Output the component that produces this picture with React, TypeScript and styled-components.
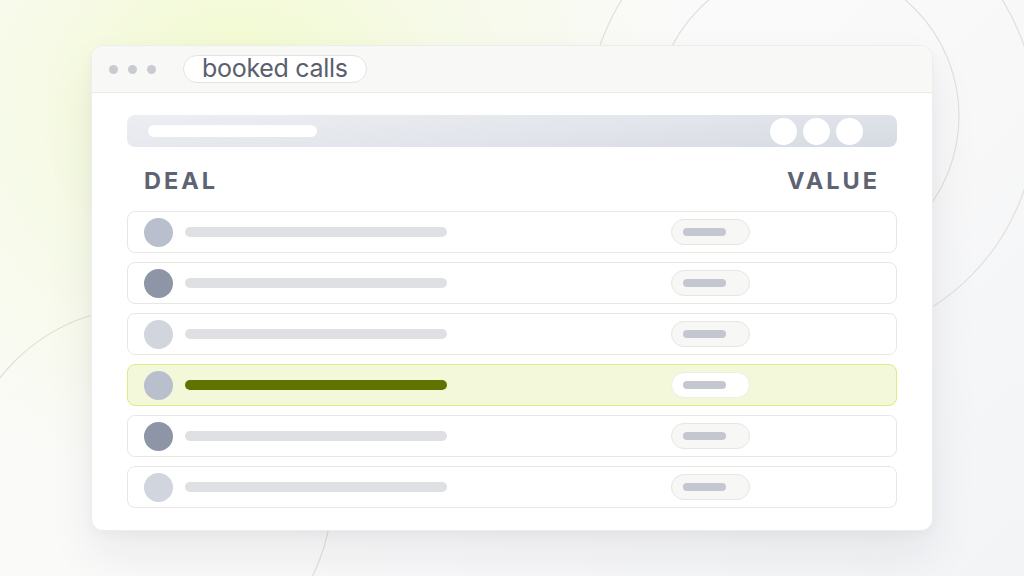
import styled, { createGlobalStyle } from 'styled-components';

const GlobalStyle = createGlobalStyle`
    html, body {
        margin: 0;
        padding: 0;
    }
    body {
        font-family: Inter, "Noto Sans", sans-serif;
        background: #fafafa;
    }
`;

type Tone = 'mid' | 'dark' | 'light';

const rows: { tone: Tone; active?: boolean }[] = [
    { tone: 'mid' },
    { tone: 'dark' },
    { tone: 'light' },
    { tone: 'mid', active: true },
    { tone: 'dark' },
    { tone: 'light' },
];

const avatarColors: Record<Tone, string> = {
    mid: '#b9bfcc',
    dark: '#8e95a6',
    light: '#d1d5dd',
};

const App = () => {
    return (
        <>
            <GlobalStyle />
            <Stage>
                <Rings viewBox="0 0 1024 576" aria-hidden>
                    <circle cx="807" cy="116" r="152" />
                    <circle cx="812" cy="118" r="224" />
                    <circle cx="146" cy="493" r="186" />
                </Rings>
                <Window>
                    <TitleBar>
                        <Dots>
                            <Dot />
                            <Dot />
                            <Dot />
                        </Dots>
                        <Tab>booked calls</Tab>
                    </TitleBar>
                    <Body>
                        <SearchBar>
                            <SearchField />
                            <Buttons>
                                <RoundButton />
                                <RoundButton />
                                <RoundButton />
                            </Buttons>
                        </SearchBar>
                        <Header>
                            <span>DEAL</span>
                            <span>VALUE</span>
                        </Header>
                        <List>
                            {rows.map((row, index) => (
                                <Row key={index} $active={row.active}>
                                    <Avatar $color={avatarColors[row.tone]} />
                                    <NameBar $active={row.active} />
                                    <ValuePill $active={row.active}>
                                        <ValueBar />
                                    </ValuePill>
                                </Row>
                            ))}
                        </List>
                    </Body>
                </Window>
            </Stage>
        </>
    );
};

const Stage = styled.div`
    position: relative;
    width: 1024px;
    height: 576px;
    overflow: hidden;
    display: flex;
    align-items: center;
    justify-content: center;
    background:
        radial-gradient(ellipse 440px 400px at 240px 110px, rgba(240, 250, 200, 1) 0, rgba(244, 250, 220, 0.65) 45%, rgba(250, 250, 250, 0) 100%),
        linear-gradient(135deg, #fbfbf8 0%, #fafafa 50%, #f3f4f6 100%);
`;

const Rings = styled.svg`
    position: absolute;
    inset: 0;
    width: 1024px;
    height: 576px;

    circle {
        fill: none;
        stroke: #e0e0dc;
        stroke-width: 1.2;
    }
`;

const Window = styled.div`
    position: relative;
    width: 842px;
    height: 486px;
    box-sizing: border-box;
    background: #ffffff;
    border: 1px solid #ededeb;
    border-radius: 12px;
    overflow: hidden;
    box-shadow:
        0 24px 48px rgba(30, 35, 50, 0.07),
        0 4px 12px rgba(30, 35, 50, 0.03);
    display: flex;
    flex-direction: column;
`;

const TitleBar = styled.div`
    height: 46px;
    flex-shrink: 0;
    background: #f8f8f6;
    border-bottom: 1px solid #e9e9e6;
    display: flex;
    align-items: center;
    padding-left: 17px;
    gap: 27px;
`;

const Dots = styled.div`
    display: flex;
    gap: 10px;
`;

const Dot = styled.span`
    width: 9px;
    height: 9px;
    border-radius: 50%;
    background: #c9cbd3;
`;

const Tab = styled.div`
    height: 28px;
    box-sizing: border-box;
    padding: 0 18px 1px 18px;
    display: flex;
    align-items: center;
    border: 1px solid #e3e3e0;
    border-radius: 14px;
    background: #ffffff;
    color: #5a5f6e;
    font-size: 25px;
    letter-spacing: -0.3px;
    line-height: 1;
`;

const Body = styled.div`
    padding: 22px 35px 0;
    display: flex;
    flex-direction: column;
`;

const SearchBar = styled.div`
    height: 32px;
    border-radius: 8px;
    background: linear-gradient(175deg, #eceef2 0%, #e2e5eb 55%, #d6dae2 100%);
    display: flex;
    align-items: center;
    justify-content: space-between;
    padding: 0 34px 0 21px;
`;

const SearchField = styled.div`
    width: 169px;
    height: 12px;
    border-radius: 6px;
    background: #ffffff;
`;

const Buttons = styled.div`
    display: flex;
    gap: 6px;
`;

const RoundButton = styled.span`
    width: 27px;
    height: 27px;
    border-radius: 50%;
    background: #ffffff;
`;

const Header = styled.div`
    display: flex;
    justify-content: space-between;
    padding: 21px 20px 17px 17px;
    color: #5e6372;
    font-size: 23.5px;
    font-weight: 700;
    letter-spacing: 3px;
    line-height: 26px;

    span:last-child {
        margin-right: -3px;
    }
`;

const List = styled.div`
    display: flex;
    flex-direction: column;
    gap: 9px;
`;

const Row = styled.div<{ $active?: boolean }>`
    height: 42px;
    box-sizing: border-box;
    border: 1px solid ${(p) => (p.$active ? '#d6ef80' : '#e7e7e4')};
    background: ${(p) => (p.$active ? '#f2f8d9' : '#ffffff')};
    border-radius: 8px;
    display: flex;
    align-items: center;
    padding-left: 16px;
`;

const Avatar = styled.span<{ $color: string }>`
    width: 29px;
    height: 29px;
    border-radius: 50%;
    background: ${(p) => p.$color};
    flex-shrink: 0;
`;

const NameBar = styled.span<{ $active?: boolean }>`
    width: 262px;
    height: 10px;
    margin-left: 12px;
    border-radius: 5px;
    background: ${(p) => (p.$active ? '#5f7400' : '#dfe0e4')};
`;

const ValuePill = styled.span<{ $active?: boolean }>`
    margin-left: 224px;
    width: 79px;
    height: 26px;
    box-sizing: border-box;
    border-radius: 13px;
    border: 1px solid ${(p) => (p.$active ? '#ecefe0' : '#e6e6e3')};
    background: ${(p) => (p.$active ? '#ffffff' : '#f7f7f5')};
    display: flex;
    align-items: center;
    padding-left: 11px;
`;

const ValueBar = styled.span`
    width: 43px;
    height: 8px;
    border-radius: 4px;
    background: #c4c7d0;
`;

export default App;
